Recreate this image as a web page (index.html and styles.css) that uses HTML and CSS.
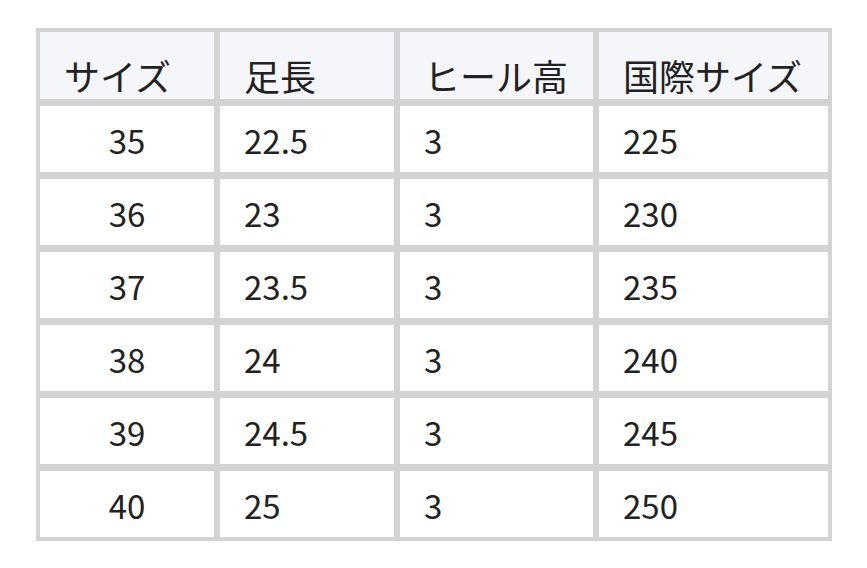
FILE: index.html
```html
<!DOCTYPE html>
<html lang="ja">
<head>
<meta charset="utf-8">
<title>サイズ表</title>
<link rel="stylesheet" href="styles.css">
</head>
<body>
<table class="size-table">
  <colgroup>
    <col class="c1"><col class="c2"><col class="c3"><col class="c4">
  </colgroup>
  <thead>
    <tr><th>サイズ</th><th>足長</th><th>ヒール高</th><th>国際サイズ</th></tr>
  </thead>
  <tbody>
    <tr><td class="center">35</td><td>22.5</td><td>3</td><td>225</td></tr>
    <tr><td class="center">36</td><td>23</td><td>3</td><td>230</td></tr>
    <tr><td class="center">37</td><td>23.5</td><td>3</td><td>235</td></tr>
    <tr><td class="center">38</td><td>24</td><td>3</td><td>240</td></tr>
    <tr><td class="center">39</td><td>24.5</td><td>3</td><td>245</td></tr>
    <tr><td class="center">40</td><td>25</td><td>3</td><td>250</td></tr>
  </tbody>
</table>
</body>
</html>
```
FILE: styles.css
```css
html, body {
  margin: 0;
  background: #ffffff;
}
body {
  padding: 28px 0 0 36px;
  font-family: "Noto Sans CJK JP", "Noto Sans", sans-serif;
  color: #222222;
}
.size-table {
  border-collapse: separate;
  border-spacing: 0;
  border: 4px solid #d3d3d3;
  table-layout: fixed;
  width: 796px;
}
.c1 { width: 174px; }
.c2 { width: 180px; }
.c3 { width: 199px; }
.c4 { width: 235px; }
.size-table th,
.size-table td {
  padding: 0 0 0 24px;
  text-align: left;
  white-space: nowrap;
  box-sizing: border-box;
}
.size-table th + th,
.size-table td + td {
  border-left: 6px solid #d3d3d3;
}
.size-table th {
  background: #f5f6fa;
  height: 67px;
  font-size: 36px;
  font-weight: 400;
  line-height: 1;
  vertical-align: bottom;
  padding-bottom: 6px;
}
.size-table td {
  height: 73px;
  border-top: 7px solid #d3d3d3;
  font-size: 33px;
  line-height: 1;
  vertical-align: bottom;
  padding-bottom: 15px;
}
.size-table td.center {
  text-align: center;
  padding-left: 0;
}
```
